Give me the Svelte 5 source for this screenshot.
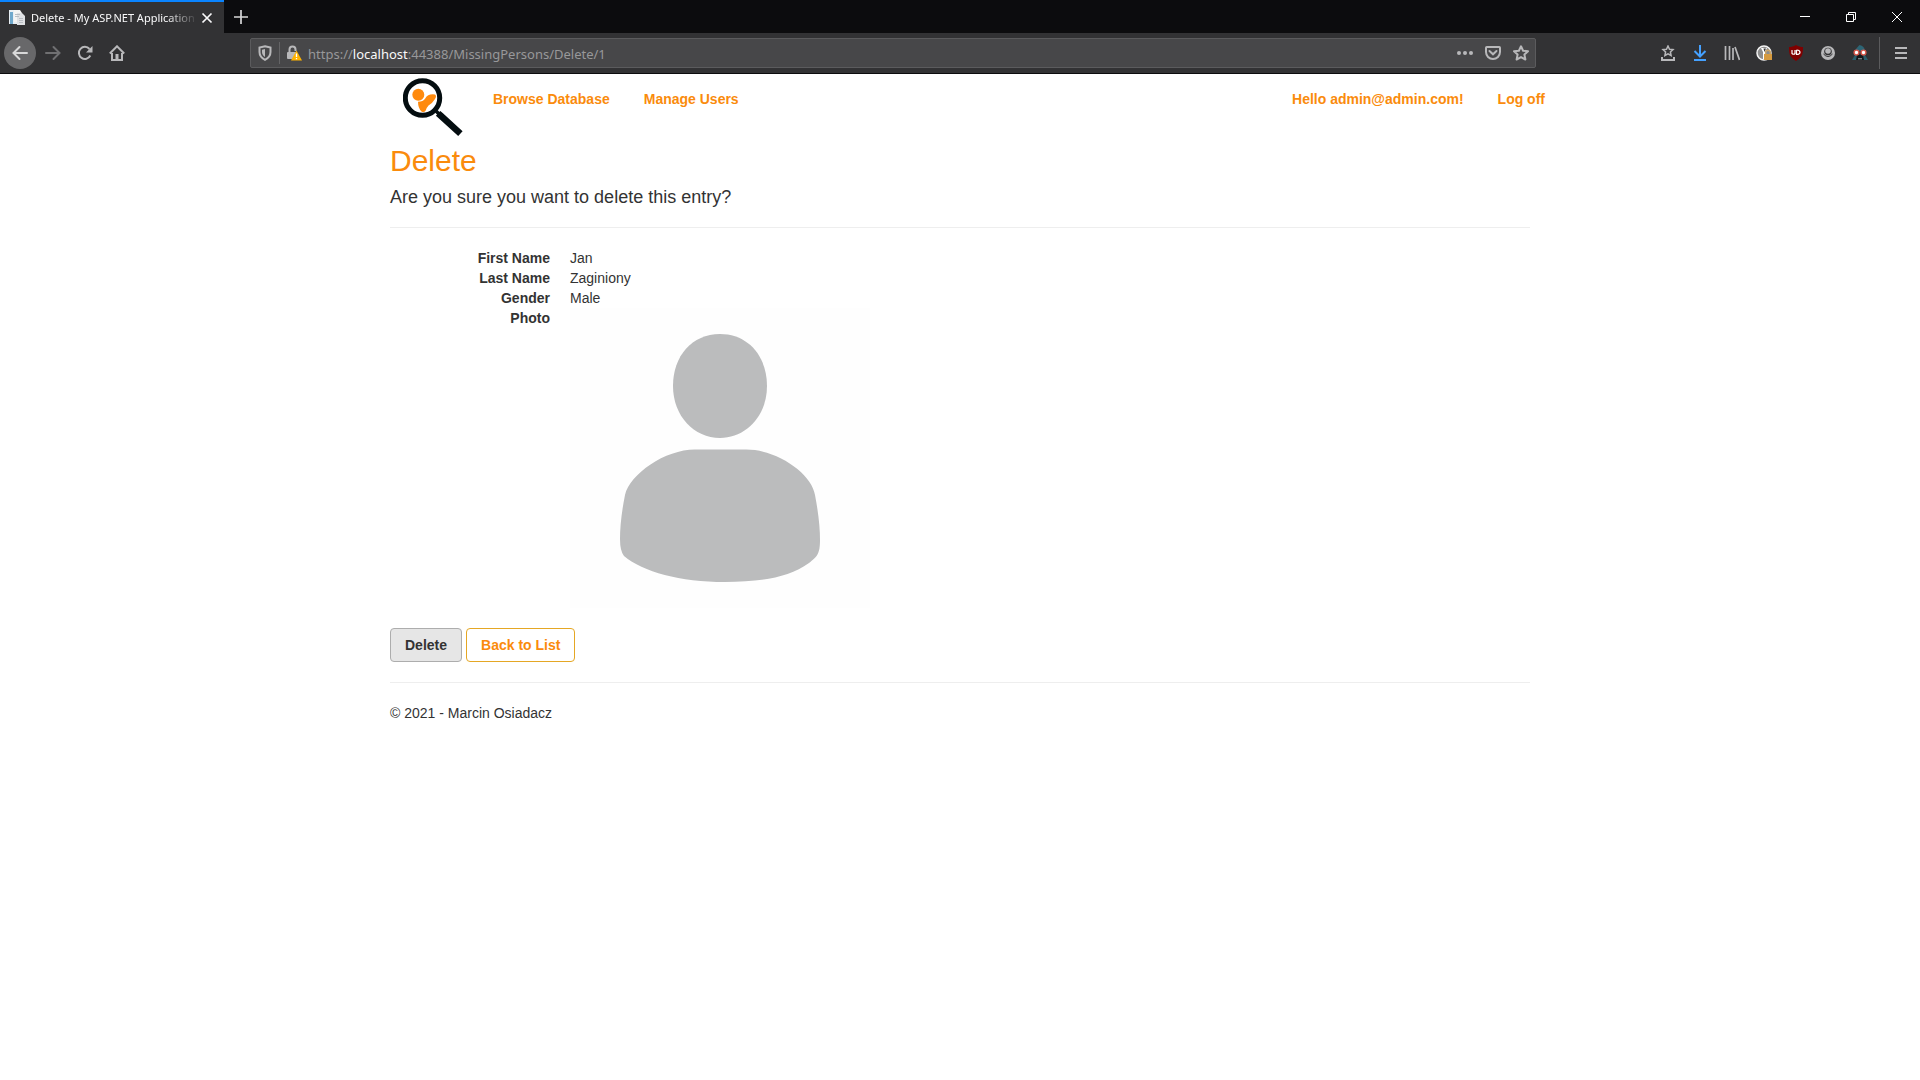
<script>
  const details = [
    { label: 'First Name', value: 'Jan' },
    { label: 'Last Name', value: 'Zaginiony' },
    { label: 'Gender', value: 'Male' },
  ];
</script>

<div class="browser">
  <header class="chrome">
    <div class="titlebar">
      <div class="tab">
        <svg class="favicon" width="16" height="16" viewBox="0 0 16 16" aria-hidden="true">
          <rect x="0" y="0" width="10" height="14" fill="#e8eef3" />
          <rect x="1" y="2" width="3" height="12" fill="#6fa8cc" />
          <path d="M5 0h6l2 3v9H5z" fill="#f4f4f4" />
          <path d="M8 3h5l3 3v9H8z" fill="#dfe1e4" />
          <path d="M6 4.500h5M6 6.500h4M10 8.500h4M10 10.500h4M10 12.500h4" stroke="#b9bec4" />
        </svg>
        <span class="tab-title">Delete - My ASP.NET Application</span>
        <button class="tab-close" aria-label="Close tab">
          <svg width="12" height="12" viewBox="0 0 12 12"><path d="M1.500 1.500l9 9M10.500 1.500l-9 9" stroke="#f9f9fa" stroke-width="1.700" /></svg>
        </button>
      </div>
      <button class="new-tab" aria-label="New tab">
        <svg width="14" height="14" viewBox="0 0 14 14"><path d="M7 0v14M0 7h14" stroke="#d7d7d8" stroke-width="1.700" /></svg>
      </button>
      <div class="window-controls">
        <button aria-label="Minimize"><svg width="10" height="10" viewBox="0 0 10 10"><path d="M0 4.500h10" stroke="#fff" /></svg></button>
        <button aria-label="Restore"><svg width="10" height="10" viewBox="0 0 10 10" fill="none" stroke="#fff"><path d="M.5 2.500h7v7h-7zM2.500 2.500v-2h7v7h-2" /></svg></button>
        <button aria-label="Close"><svg width="10" height="10" viewBox="0 0 10 10"><path d="M0 0l10 10M10 0L0 10" stroke="#fff" /></svg></button>
      </div>
    </div>

    <div class="toolbar">
      <div class="nav-buttons">
        <button class="back" aria-label="Back">
          <svg width="16" height="16" viewBox="0 0 16 16"><path d="M15 8H1.500M7.500 2l-6 6 6 6" stroke-linecap="round" /></svg>
        </button>
        <button class="forward" aria-label="Forward">
          <svg width="16" height="16" viewBox="0 0 16 16"><path d="M1 8h13.500M8.500 2l6 6-6 6" stroke-linecap="round" /></svg>
        </button>
        <button aria-label="Reload">
          <svg width="16" height="16" viewBox="0 0 16 16"><path d="M13.300 10.500A6 6 0 1 1 12.500 4" /><path d="M15.500 1v6.500H9z" class="solid" /></svg>
        </button>
        <button aria-label="Home">
          <svg width="16" height="16" viewBox="0 0 16 16"><path d="M.8 8.500L8 1.300l7.200 7.200" /><path d="M3 8v7h10V8" /><path d="M6.500 9h3v6h-3z" class="solid" /></svg>
        </button>
      </div>

      <div class="address">
        <button class="shield" aria-label="Tracking protection">
          <svg width="14" height="16" viewBox="0 0 14 16"><path d="M7 1.200L12.500 2.500V7c0 3.500-2 6-5.500 7.800C3.500 13 1.500 10.500 1.500 7V2.500z" /><path d="M7 4l-3 .7V7c0 2 1 3.700 3 5z" class="solid" /></svg>
        </button>
        <button class="lock" aria-label="Connection is not secure">
          <svg width="16" height="16" viewBox="0 0 16 16">
            <path d="M3.500 8V4.500a3 3 0 0 1 6 0V6" /><rect x="1" y="7" width="10" height="7" rx="1" class="solid" />
            <path d="M10.500 5.500L16 15.500H5z" fill="#ffb300" stroke="none" /><path d="M10.500 8.500v3.500M10.500 13v1.300" stroke="#fff" stroke-width="1.300" />
          </svg>
        </button>
        <div class="url">https://<b>localhost</b>:44388/MissingPersons/Delete/1</div>
        <div class="address-actions">
          <button aria-label="Page actions"><svg width="16" height="16" viewBox="0 0 16 16"><g class="solid"><circle cx="2" cy="8" r="2" /><circle cx="8" cy="8" r="2" /><circle cx="14" cy="8" r="2" /></g></svg></button>
          <button aria-label="Save to Pocket"><svg width="16" height="16" viewBox="0 0 16 16"><path d="M1.800 2h12.400q.8 0 .8.800V7A7 7 0 0 1 1 7V2.800q0-.8.800-.8z" /><path d="M4.500 6L8 9.300 11.500 6" stroke-linecap="round" /></svg></button>
          <button aria-label="Bookmark this page"><svg width="16" height="16" viewBox="0 0 16 16"><path d="M8 1.300l2.100 4.400 4.900.6-3.600 3.300 1 4.900L8 12.100l-4.400 2.400 1-4.900L1 6.300l4.900-.6z" stroke-linejoin="round" /></svg></button>
        </div>
      </div>

      <div class="extensions">
        <button aria-label="Bookmarks"><svg width="16" height="16" viewBox="0 0 16 16"><path d="M8 1l1.500 3.200 3.500.4-2.600 2.400.7 3.500L8 8.800l-3.100 1.700.7-3.500L3 4.600l3.500-.4z" stroke-width="1.500" /><path d="M2 12v3h12v-3" /></svg></button>
        <button class="download" aria-label="Downloads"><svg width="16" height="16" viewBox="0 0 16 16"><path d="M8 0v11M2.500 6L8 11.500 13.500 6M2 15h12" /></svg></button>
        <button aria-label="Library"><svg width="16" height="16" viewBox="0 0 16 16"><path d="M1.500 1v14M5.500 1v14M9 3v12M11 2l4.500 13" stroke-width="1.700" /></svg></button>
        <button aria-label="Privacy extension"><svg width="16" height="16" viewBox="0 0 16 16"><circle cx="8" cy="8" r="7" fill="#8d8d8d" stroke="#f5f5f5" stroke-width="1.500" /><path d="M5 3h6L9 7v7H7V7z" fill="#fff" stroke="none" /><path d="M7.500 3.500h2.500L8.500 7z" fill="#333" stroke="none" /><path d="M9.700 10V7.500a2.300 2.300 0 0 1 4.600 0V10" stroke="#c9a468" stroke-width="1.500" /><rect x="8" y="9" width="8" height="6" fill="#d69a3e" stroke="none" /></svg></button>
        <button aria-label="Ad blocker"><svg width="16" height="16" viewBox="0 0 16 16"><path d="M8 0c2.500 1.500 4.500 2 7 2 0 7-.5 10-7 14C1.500 12 1 9 1 2c2.500 0 4.500-.5 7-2z" fill="#800000" stroke="none" /><path d="M4 5v3.500q1.700 1.500 3 0V5M8.500 5v4.500q3.500 0 3.500-2.200T8.500 5" stroke="#fff" stroke-width="1.200" /></svg></button>
        <button aria-label="Account"><svg width="16" height="16" viewBox="0 0 16 16"><circle cx="8" cy="8" r="7" class="solid" /><circle cx="8" cy="6.500" r="3.800" class="cutout" /><path d="M3.500 9q4.500 5 9 0" class="cutline" /><circle cx="8" cy="6" r="2.800" class="solid" /></svg></button>
        <button aria-label="Incognito extension"><svg width="16" height="16" viewBox="0 0 16 16"><g stroke="none"><path d="M2.500 6q2-3 5-6 5 1 5.500 6z" fill="#2d6575" /><path d="M0 15l3-5h10l3 5z" fill="#2a5d6b" /><path d="M5 10h6l1 5H4z" fill="#15181b" /></g><path d="M6 13.800h4" stroke="#9aa5a8" stroke-width="1" /><g fill="#fff" stroke="#d8574a" stroke-width="1.400"><circle cx="4.500" cy="7.500" r="2.400" /><circle cx="11.500" cy="7.500" r="2.400" /></g></svg></button>
      </div>
      <button class="menu" aria-label="Open menu"><svg width="16" height="16" viewBox="0 0 16 16"><path d="M2 3h12M2 8h12M2 13h12" /></svg></button>
    </div>
  </header>

  <div class="page">
    <nav class="navbar">
      <a class="brand" href="/" aria-label="Home">
        <svg width="60" height="60" viewBox="0 0 60 60">
          <circle cx="19.500" cy="20" r="17.200" fill="#fff" stroke="#040d10" stroke-width="5" />
          <path d="M32 32l5 5" stroke="#040d10" stroke-width="3.500" />
          <path d="M37.500 37.500L55 53.500" stroke="#040d10" stroke-width="6.500" stroke-linecap="square" />
          <circle cx="15.300" cy="16.700" r="6" fill="#ff8a0d" />
          <path d="M15 23.700Q20 23.700 22.200 20.500 25 15.500 32 16.500 34 18 32 21 29 25.800 25.500 27.500 24 29 22.700 32.500 21 35 18.500 33.500 15 30 15 23.700Z" fill="#ff8a0d" />
        </svg>
      </a>
      <a class="nav-link" href="/MissingPersons">Browse Database</a>
      <a class="nav-link" href="/Users">Manage Users</a>
      <div class="account">
        <a class="nav-link" href="/Manage">Hello admin@admin.com!</a>
        <a class="nav-link" href="/LogOff">Log off</a>
      </div>
    </nav>

    <main>
      <h2>Delete</h2>
      <h3>Are you sure you want to delete this entry?</h3>
      <hr />
      <dl>
        {#each details as item}
          <dt>{item.label}</dt>
          <dd>{item.value}</dd>
        {/each}
        <dt>Photo</dt>
        <dd>
          <svg class="photo" width="300" height="300" viewBox="0 0 300 300" role="img" aria-label="Portrait placeholder">
            <path d="M150 26C178 26 197 48 197 78S176 130 150 130 103 108 103 78 122 26 150 26Z" />
            <path d="M125 141.500H176C208 141.500 242 166 245 187Q250 213 250 232C250 246 247 249 239 255C218 270 190 274 155 274C110 274 73 264 54 248Q50 243 50 231Q50 212 55 187C60 166 95 141.500 125 141.500Z" />
          </svg>
        </dd>
      </dl>
      <form class="actions" onsubmit={(event) => event.preventDefault()}>
        <button class="btn btn-delete" type="submit">Delete</button>
        <a class="btn btn-back" href="/MissingPersons">Back to List</a>
      </form>
      <hr />
      <footer>© 2021 - Marcin Osiadacz</footer>
    </main>
  </div>
</div>

<style>
  :global(body) { background: #fff; }
  .browser, .browser :global(*) { box-sizing: border-box; }
  .browser { font-family: 'Liberation Sans', Arial, sans-serif; color: #333; font-size: 14px; line-height: 20px; }

  .chrome { font-family: 'Noto Sans', 'Open Sans', sans-serif; border-bottom: 1px solid #0c0c0d; }
  .chrome button { display: flex; align-items: center; justify-content: center; padding: 0; border: 0; background: none; }
  .chrome svg { display: block; flex: none; }
  .titlebar { display: flex; height: 33px; background: #0c0c0e; }
  .tab { display: flex; align-items: center; width: 224px; padding: 0 10px 0 9px; background: #323234; border-top: 2px solid #0a84ff; }
  .tab-title { flex: 1; min-width: 0; margin: 0 2px 0 6px; overflow: hidden; white-space: nowrap; font-size: 11px; color: #f9f9fa; mask-image: linear-gradient(to left, transparent, #000 32px); }
  .tab-close { width: 14px; height: 24px; }
  .new-tab { width: 34px; }
  .window-controls { display: flex; margin-left: auto; }
  .window-controls button { width: 46px; }

  .toolbar { display: flex; align-items: center; height: 40px; padding: 0 3px 0 4px; background: #323234; }
  .toolbar svg { fill: none; stroke: #b8b8ba; stroke-width: 2; }
  .toolbar .solid { fill: #b8b8ba; stroke: none; }
  .toolbar .cutout { fill: #323234; stroke: none; }
  .toolbar .cutline { stroke: #323234; stroke-width: 1; }
  .nav-buttons { display: flex; }
  .toolbar .nav-buttons button, .extensions button, .menu { width: 32px; height: 32px; }
  .toolbar .back { border-radius: 50%; background: #68686a; margin-right: 1px; }
  .back svg { stroke: #d8d8d9; }
  .toolbar .forward svg { stroke: #707072; }
  .address { display: flex; flex: 1; align-items: center; height: 30px; margin: 0 116px 0 117px; background: #474749; border: 1px solid #5b5b5d; border-radius: 2px; }
  .address .shield { width: 29px; height: 22px; border-right: 1px solid #646466; }
  .address .lock { width: 28px; }
  .url { flex: 1; padding-top: 1px; font-size: 13px; color: #98989a; white-space: nowrap; }
  .url b { font-weight: 400; color: #f9f9fa; }
  .address-actions { display: flex; }
  .address-actions button { width: 28px; height: 28px; }
  .extensions { display: flex; padding-right: 3px; border-right: 1px solid #5b5b5d; }
  .toolbar .download svg { stroke: #45a1ff; }
  .menu { margin-left: 5px; }

  .page { max-width: 1170px; margin: 0 auto; padding: 0 15px; }
  .navbar { display: flex; align-items: flex-start; height: 50px; margin-right: -32px; font-weight: 700; }
  .brand { width: 86px; height: 50px; padding: 4px 0 0 13px; overflow: visible; }
  .brand svg { display: block; }
  .nav-link { padding: 15px 17px; color: #fa8b0c; text-decoration: none; white-space: nowrap; }
  .account { display: flex; margin-left: auto; }

  h2, h3 { font-weight: 400; }
  h2 { margin: 20px 0 10px; color: #fa8b0c; font-size: 30px; line-height: 33px; }
  h3 { margin: 10px 0; font-size: 18px; line-height: 20px; }
  hr { height: 1px; margin: 20px 0; border: 0; background: #eee; }
  dl { display: grid; grid-template-columns: 160px 1fr; column-gap: 20px; margin: 0 0 20px; }
  dt { text-align: right; font-weight: 700; }
  dd { margin: 0; }
  .photo { display: block; max-width: 100%; background: #fefefe; fill: #bbbcbd; }
  .actions { display: flex; gap: 4px; }
  .btn { padding: 6px 14px; border: 1px solid; border-radius: 4px; font: inherit; font-weight: 700; text-decoration: none; }
  .btn-delete { color: #333; background: #e6e6e6; border-color: #adadad; }
  .btn-back { color: #fa8b0c; background: #fff; border-color: #e5a724; }
</style>
